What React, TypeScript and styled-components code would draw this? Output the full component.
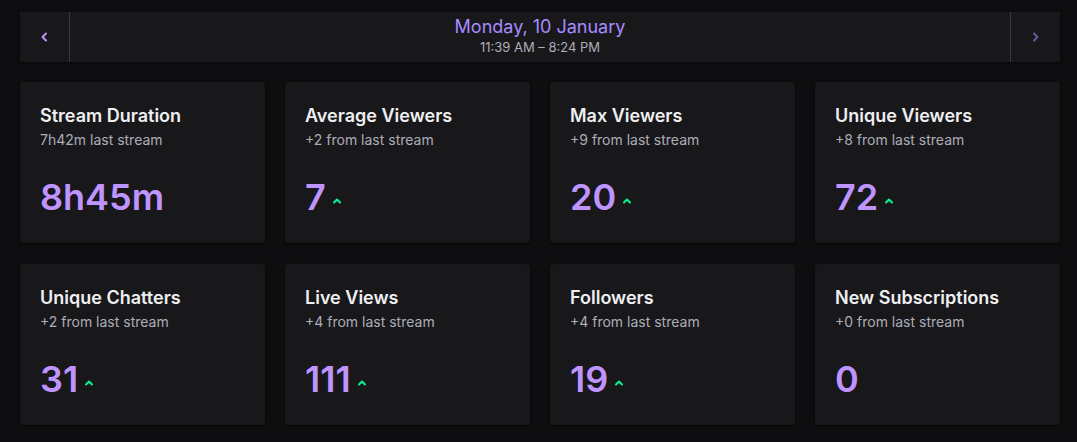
import React from "react";
import styled, { createGlobalStyle } from "styled-components";

const GlobalStyle = createGlobalStyle`
  body {
    margin: 0;
    background: #0e0e10;
    font-family: Inter, "Noto Sans", sans-serif;
    color: #efeff1;
  }
`;

const Page = styled.div`
  padding: 12px 17px 12px 20px;
  display: flex;
  flex-direction: column;
  gap: 20px;
`;

const DateBar = styled.div`
  display: flex;
  height: 50px;
  background: #18181b;
  box-shadow: 0 1px 3px rgba(0, 0, 0, 0.6);
`;

const NavButton = styled.button<{ $side: "left" | "right" }>`
  width: 50px;
  border: none;
  background: transparent;
  padding: 0;
  display: flex;
  align-items: center;
  justify-content: center;
  cursor: pointer;
  color: ${(p) => (p.$side === "left" ? "#bf94ff" : "#6e56a8")};
  ${(p) =>
    p.$side === "left"
      ? "border-right: 1px solid #3a3a3d;"
      : "border-left: 1px solid #3a3a3d;"}
`;

const DateInfo = styled.div`
  flex: 1;
  display: flex;
  flex-direction: column;
  align-items: center;
  padding-top: 4px;
  gap: 1px;
`;

const DateTitle = styled.div`
  font-size: 18px;
  line-height: 22px;
  color: #a98bff;
`;

const DateTime = styled.div`
  font-size: 13px;
  line-height: 16px;
  color: #adadb8;
`;

const Grid = styled.div`
  display: grid;
  grid-template-columns: repeat(4, 1fr);
  column-gap: 20px;
  row-gap: 21px;
`;

const Card = styled.div`
  height: 161px;
  box-sizing: border-box;
  padding: 22px 20px 0;
  background: #18181b;
  border-radius: 4px;
  box-shadow: 0 1px 3px rgba(0, 0, 0, 0.6);
  display: flex;
  flex-direction: column;
`;

const CardTitle = styled.div`
  font-size: 18px;
  font-weight: 600;
  line-height: 24px;
  color: #efeff1;
`;

const CardSub = styled.div`
  margin-top: 2px;
  font-size: 14px;
  line-height: 20px;
  color: #adadb8;
`;

const ValueRow = styled.div`
  margin-top: 25px;
  display: flex;
  align-items: center;
  gap: 6px;
`;

const Value = styled.span`
  font-size: 36px;
  font-weight: 600;
  line-height: 44px;
  color: #bf94ff;
`;

const Trend = styled.span`
  display: flex;
  color: #00f593;
  margin-top: 7px;
`;

const Chevron = ({ dir }: { dir: "left" | "right" | "up" }) => {
  const d =
    dir === "left"
      ? "M6 1.5 L2.5 5 L6 8.5"
      : dir === "right"
      ? "M3 1.5 L6.5 5 L3 8.5"
      : "M2 6.5 L5 3.5 L8 6.5";
  return (
    <svg width="10" height="10" viewBox="0 0 10 10" fill="none">
      <path d={d} stroke="currentColor" strokeWidth="2" strokeLinecap="round" strokeLinejoin="round" />
    </svg>
  );
};

const stats = [
  { title: "Stream Duration", sub: "7h42m last stream", value: "8h45m", up: false },
  { title: "Average Viewers", sub: "+2 from last stream", value: "7", up: true },
  { title: "Max Viewers", sub: "+9 from last stream", value: "20", up: true },
  { title: "Unique Viewers", sub: "+8 from last stream", value: "72", up: true },
  { title: "Unique Chatters", sub: "+2 from last stream", value: "31", up: true },
  { title: "Live Views", sub: "+4 from last stream", value: "111", up: true },
  { title: "Followers", sub: "+4 from last stream", value: "19", up: true },
  { title: "New Subscriptions", sub: "+0 from last stream", value: "0", up: false },
];

const App = () => {
  return (
    <>
      <GlobalStyle />
      <Page>
        <DateBar>
          <NavButton $side="left">
            <Chevron dir="left" />
          </NavButton>
          <DateInfo>
            <DateTitle>Monday, 10 January</DateTitle>
            <DateTime>11:39 AM – 8:24 PM</DateTime>
          </DateInfo>
          <NavButton $side="right">
            <Chevron dir="right" />
          </NavButton>
        </DateBar>
        <Grid>
          {stats.map((s) => (
            <Card key={s.title}>
              <CardTitle>{s.title}</CardTitle>
              <CardSub>{s.sub}</CardSub>
              <ValueRow>
                <Value>{s.value}</Value>
                {s.up && (
                  <Trend>
                    <Chevron dir="up" />
                  </Trend>
                )}
              </ValueRow>
            </Card>
          ))}
        </Grid>
      </Page>
    </>
  );
};

export default App;
